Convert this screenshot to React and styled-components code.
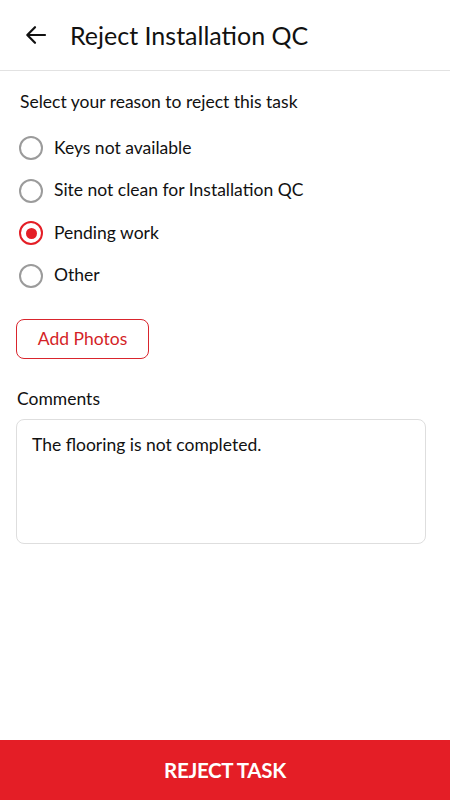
import React, { useState } from "react";
import styled, { createGlobalStyle } from "styled-components";

const Global = createGlobalStyle`
  html, body { margin: 0; padding: 0; background: #fff; }
  body { font-family: Lato, "Open Sans", sans-serif; color: #111; }
  * { box-sizing: border-box; }
`;

const Page = styled.div`
  width: 450px;
  height: 800px;
  display: flex;
  flex-direction: column;
  background: #fff;
`;

const Header = styled.header`
  height: 71px;
  display: flex;
  align-items: center;
  padding: 0 0 0 22px;
  border-bottom: 1px solid #e2e2e2;
  flex-shrink: 0;
`;

const BackButton = styled.button`
  width: 28px;
  height: 28px;
  border: 0;
  background: none;
  padding: 0;
  display: flex;
  align-items: center;
  justify-content: center;
  margin-right: 20px;
  margin-top: -1px;
`;

const Title = styled.h1`
  margin: 0;
  font-size: 25px;
  font-weight: 400;
  color: #111;
  margin-top: -1px;
`;

const Content = styled.main`
  flex: 1;
  padding: 20px 24px 0 16px;
  display: flex;
  flex-direction: column;
`;

const Prompt = styled.p`
  margin: 0 0 0 4px;
  font-size: 17.5px;
  line-height: 21px;
  color: #111;
`;

const RadioList = styled.div`
  display: flex;
  flex-direction: column;
  margin-top: 15px;
`;

const RadioRow = styled.label`
  display: flex;
  align-items: center;
  height: 42.5px;
  cursor: pointer;
`;

const RadioCircle = styled.span`
  width: 24px;
  height: 24px;
  border-radius: 50%;
  border: 2.5px solid ${(p) => (p.$checked ? "#e41e26" : "#9b9b9b")};
  display: flex;
  align-items: center;
  justify-content: center;
  margin-left: 3px;
  margin-right: 11px;
  flex-shrink: 0;
  &::after {
    content: "";
    display: ${(p) => (p.$checked ? "block" : "none")};
    width: 11px;
    height: 11px;
    border-radius: 50%;
    background: #e41e26;
  }
`;

const RadioText = styled.span`
  font-size: 17.5px;
  color: #111;
  margin-top: -2px;
`;

const OutlineButton = styled.button`
  align-self: flex-start;
  margin-top: 22px;
  width: 133px;
  height: 40px;
  border: 1.3px solid #d9252d;
  border-radius: 8px;
  background: #fff;
  color: #d41f27;
  font-family: Lato, sans-serif;
  font-size: 17.5px;
  padding: 0 0 1px;
`;

const Label = styled.div`
  margin-top: 29px;
  font-size: 17.5px;
  color: #111;
  margin-left: 1px;
`;

const TextArea = styled.div`
  margin-top: 10px;
  height: 125px;
  border: 1px solid #dedede;
  border-radius: 8px;
  padding: 14px 15px;
  font-size: 17.5px;
  color: #111;
`;

const BottomButton = styled.button`
  height: 60px;
  width: 100%;
  border: 0;
  background: #e41e26;
  color: #fff;
  font-family: Lato, sans-serif;
  font-weight: 700;
  font-size: 20.5px;
  letter-spacing: -0.3px;
  flex-shrink: 0;
  padding: 0;
`;

const reasons = [
  "Keys not available",
  "Site not clean for Installation QC",
  "Pending work",
  "Other",
];

export default function App() {
  const [selected, setSelected] = useState(2);
  return (
    <Page>
      <Global />
      <Header>
        <BackButton aria-label="Back">
          <svg width="24" height="24" viewBox="0 0 24 24" fill="none">
            <path
              d="M21 12H3.5M11 4.2L3.3 12l7.7 7.8"
              stroke="#111"
              strokeWidth="2.2"
              strokeLinecap="round"
              strokeLinejoin="round"
            />
          </svg>
        </BackButton>
        <Title>Reject Installation QC</Title>
      </Header>
      <Content>
        <Prompt>Select your reason to reject this task</Prompt>
        <RadioList>
          {reasons.map((r, i) => (
            <RadioRow key={r} onClick={() => setSelected(i)}>
              <RadioCircle $checked={selected === i} />
              <RadioText>{r}</RadioText>
            </RadioRow>
          ))}
        </RadioList>
        <OutlineButton>Add Photos</OutlineButton>
        <Label>Comments</Label>
        <TextArea>The flooring is not completed.</TextArea>
      </Content>
      <BottomButton>REJECT TASK</BottomButton>
    </Page>
  );
}
